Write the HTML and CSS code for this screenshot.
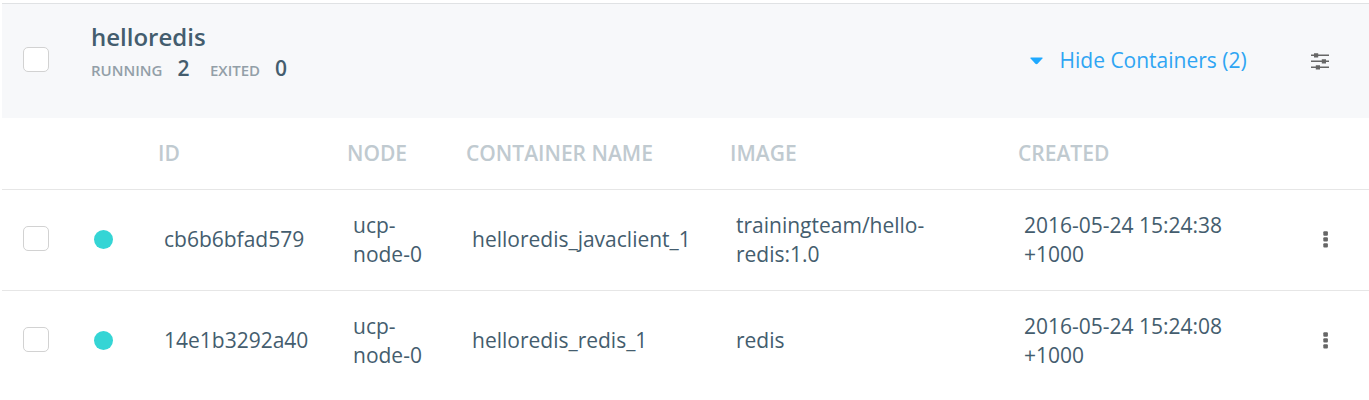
FILE: index.html
```
<!DOCTYPE html>
<html lang="en">
<head>
<meta charset="utf-8">
<title>helloredis</title>
<link rel="stylesheet" href="styles.css">
</head>
<body>
<main class="panel">
<header class="app-header">
<span class="checkbox"></span>
<div class="app-info">
<h1 class="app-name">helloredis</h1>
<div class="stats"><span class="label">RUNNING</span><span class="count">2</span><span class="label exited">EXITED</span><span class="count">0</span></div>
</div>
<a class="toggle"><svg class="caret" width="14" height="8" viewBox="0 0 14 8"><path d="M1 .5h11q1 .2.4 1L7.6 6.8q-1.1.9-2.2 0L.6 1.5q-.6-.8.4-1z"/></svg>Hide Containers (2)</a>
<svg class="settings" width="20" height="18" viewBox="0 0 20 18"><path d="M1 3.3h18M1 9.3h18M1 15.3h18"/><path class="knob" d="M4 1.2h4.2v4.2H4zM11.8 7.2H16v4.2h-4.2zM5.8 13.2H10v4.2H5.8z"/></svg>
</header>
<div class="row head">
<span class="id">ID</span><span class="node">NODE</span><span class="name">CONTAINER NAME</span><span class="image">IMAGE</span><span class="created">CREATED</span>
</div>
<div class="row">
<span class="checkbox"></span><span class="status"></span><span class="id">cb6b6bfad579</span><span class="node">ucp-<br>node-0</span><span class="name">helloredis_javaclient_1</span><span class="image">trainingteam/hello-<br>redis:1.0</span><span class="created">2016-05-24 15:24:38<br>+1000</span>
<svg class="menu" width="6" height="17" viewBox="0 0 6 17"><rect x=".3" y=".3" width="4.6" height="4.4" rx="1"/><rect x=".3" y="6.2" width="4.6" height="4.4" rx="1"/><rect x=".3" y="12.2" width="4.6" height="4.4" rx="1"/></svg>
</div>
<div class="row">
<span class="checkbox"></span><span class="status"></span><span class="id">14e1b3292a40</span><span class="node">ucp-<br>node-0</span><span class="name">helloredis_redis_1</span><span class="image">redis</span><span class="created">2016-05-24 15:24:08<br>+1000</span>
<svg class="menu" width="6" height="17" viewBox="0 0 6 17"><rect x=".3" y=".3" width="4.6" height="4.4" rx="1"/><rect x=".3" y="6.2" width="4.6" height="4.4" rx="1"/><rect x=".3" y="12.2" width="4.6" height="4.4" rx="1"/></svg>
</div>
</main>
</body>
</html>
```
FILE: styles.css
```
* { box-sizing: border-box; }
body { margin: 0; background: #fff; color: #445d6e; font: 21px/29px "Open Sans", sans-serif; overflow: hidden; }
.panel { margin: 3px 0 0 2px; }
.app-header { height: 115px; background: #f7f8fa; border-top: 1px solid #e0e2e4; display: grid; grid-template-columns: 89px 1fr 280.5px 59px; align-items: start; }
.checkbox { width: 26px; height: 25px; margin: 0 0 2px 21px; border: 1px solid #d2d2d2; border-radius: 5px; background: #fff; }
.app-header .checkbox { margin-top: 43px; }
.app-info { padding-top: 17px; }
.app-name { margin: 0; font-size: 24px; line-height: 32px; font-weight: 600; }
.stats { display: flex; align-items: baseline; line-height: 30px; }
.label { font-size: 15px; font-weight: 600; color: #939fa8; margin-right: 15px; }
.exited { margin-left: 20.5px; }
.count { font-weight: 600; }
.toggle { margin-top: 42px; color: #2fa5f3; display: flex; align-items: center; }
.caret { fill: #1fa9ff; margin-right: 16px; }
.settings { margin-top: 48px; fill: none; stroke: #666; stroke-width: 1.5; }
.knob { fill: #666; stroke: none; }
.row { display: grid; grid-template-columns: 89px 73px 189px 119px 264px 288px 299px 40px; align-items: center; height: 101px; padding-bottom: 1px; border-top: 1px solid #e6e6e6; }
.row > * { grid-row: 1; }
.head { height: 71px; padding: 0; border-top: 0; margin-left: -6px; font-weight: 600; color: #c0cad0; }
.id { grid-column: 3; }
.node { grid-column: 4; }
.name { grid-column: 5; }
.image { grid-column: 6; }
.created { grid-column: 7; }
.status { width: 19px; height: 19px; border-radius: 50%; background: #35d5d5; margin-left: 3px; }
.menu { grid-column: 8; fill: #666; }
```
